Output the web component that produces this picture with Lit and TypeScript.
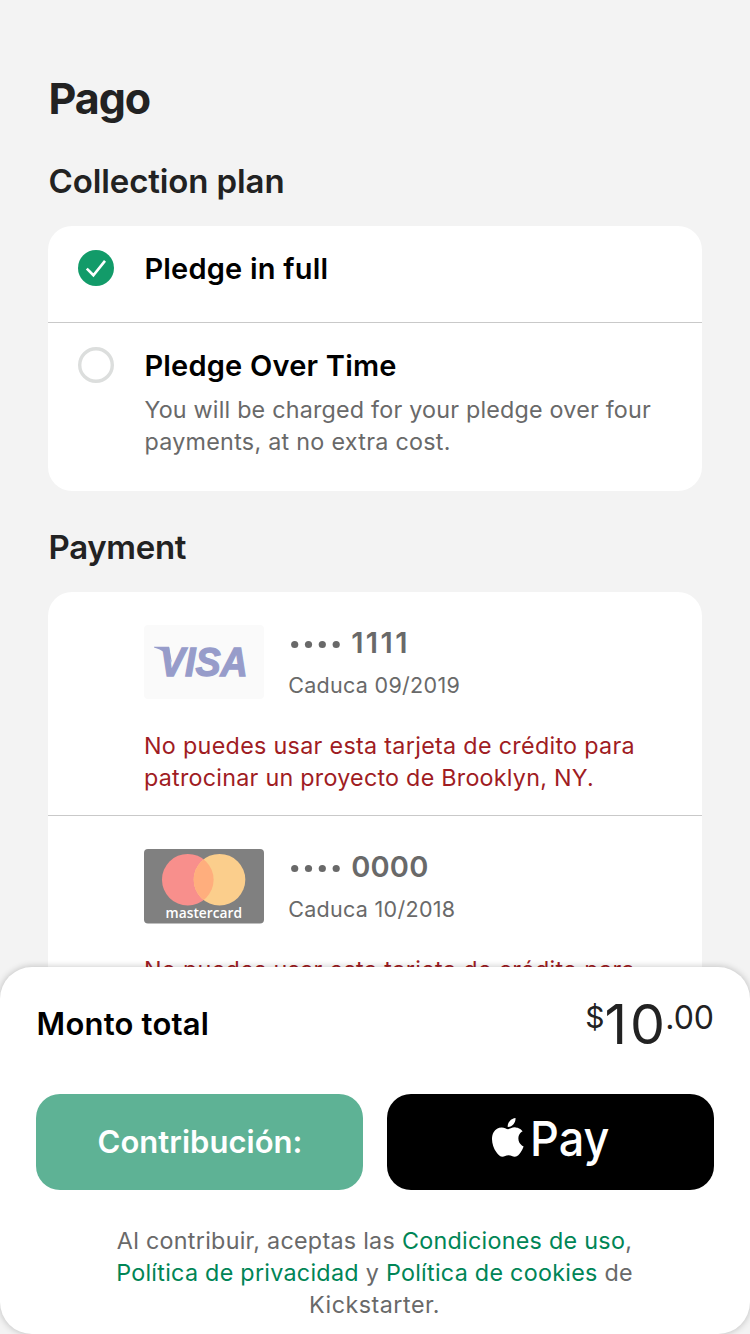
import { LitElement, html, svg, css, nothing } from "lit";
import { customElement, property } from "lit/decorators.js";

const base = css`
  :host { display: block; box-sizing: border-box; }
  svg { display: block; }
  h1, h2, p { margin: 0; }
`;

/** Round selector: filled with a tick when chosen, an empty ring otherwise. */
@customElement("plan-option")
class PlanOption extends LitElement {
  @property() label = "";
  @property({ type: Boolean }) selected = false;
  @property({ attribute: false }) lines: string[] = [];

  static styles = [base, css`
    .row { display: flex; gap: 30.4px; padding: 24px 30px 0; }
    .mark { flex: none; width: 36px; height: 36px; }
    .title { font-size: 29px; line-height: 37px; font-weight: 600; color: #000; letter-spacing: .21px; white-space: nowrap; }
    .note { margin-top: 10px; font-size: 23.3px; line-height: 32px; color: #696969; white-space: nowrap; }
    .note p:first-child { letter-spacing: .21px; }
    .note p:last-child { letter-spacing: .28px; }
  `];

  render() {
    return html`<div class="row">
      <svg class="mark" viewBox="0 0 36 36">
        ${this.selected
          ? svg`<circle cx="18" cy="18" r="18" fill="#129b69"/><path d="M8.8 18.6 L15.4 25.2 L27 10.9" fill="none" stroke="#fff" stroke-width="2.6"/>`
          : svg`<circle cx="18" cy="18" r="16.3" fill="#fff" stroke="#dcdedd" stroke-width="3.4"/>`}
      </svg>
      <div>
        <div class="title">${this.label}</div>
        ${this.lines.length ? html`<div class="note">${this.lines.map((l) => html`<p>${l}</p>`)}</div>` : nothing}
      </div>
    </div>`;
  }
}

const visa = svg`
  <rect width="120" height="74" rx="4" fill="#fafafa"/>
  <path d="M10 21.7 H25 L28 38 C24 28.5 18 24.9 10 22.6 Z" fill="#979cca"/>
  <text class="visa" x="15.8" y="51.2" textLength="88" lengthAdjust="spacingAndGlyphs">VISA</text>`;

const mastercard = svg`
  <defs><clipPath id="left"><circle cx="43.8" cy="30.7" r="25.8"/></clipPath></defs>
  <rect width="120" height="74.5" rx="4" fill="#808080"/>
  <circle cx="43.8" cy="30.7" r="25.8" fill="#f88f8c"/>
  <circle cx="75.5" cy="30.7" r="25.8" fill="#fbce8c"/>
  <circle cx="75.5" cy="30.7" r="25.8" fill="#ffae7d" clip-path="url(#left)"/>
  <text class="mc" x="21.6" y="69" textLength="76.4" lengthAdjust="spacingAndGlyphs">mastercard</text>`;

@customElement("saved-card")
class SavedCard extends LitElement {
  @property() brand = "visa";
  @property() digits = "";
  @property() expiry = "";
  @property({ attribute: false }) warning: string[] = [];

  static styles = [base, css`
    .card { box-sizing: border-box; padding: 33px 0 0 96px; height: 223px; }
    .top { display: flex; gap: 24.2px; height: 74px; }
    .logo { width: 120px; height: 75px; }
    .visa { font: italic 700 40px "Liberation Sans", sans-serif; fill: #979cca; stroke: #979cca; stroke-width: 1.3px; }
    .mc { font: 600 13.4px "Open Sans", sans-serif; fill: #fff; }
    .number { display: flex; height: 36px; font-size: 29px; line-height: 36px; font-weight: 600; color: #696969; }
    .dots { width: 63px; height: 36px; }
    .n1111 { letter-spacing: 2.4px; }
    .n0000 { letter-spacing: .2px; }
    .expiry { margin-top: 10px; font-size: 21.5px; line-height: 28px; color: #696969; letter-spacing: .3px; white-space: nowrap; }
    .warn { margin-top: 31px; font-size: 23.3px; line-height: 32px; color: #9f1c23; white-space: nowrap; }
    .warn p { letter-spacing: .31px; }
    .warn p + p { letter-spacing: .25px; }
  `];

  render() {
    return html`<div class="card">
      <div class="top">
        <svg class="logo" viewBox="0 0 120 75">${this.brand === "visa" ? visa : mastercard}</svg>
        <div>
          <div class="number">
            <svg class="dots" viewBox="0 0 63 36">
              ${[6.7, 20.5, 34.3, 48.2].map((x) => svg`<circle cx="${x}" cy="19.5" r="3.6" fill="#696969"/>`)}
            </svg>
            <span class="n${this.digits}">${this.digits}</span>
          </div>
          <div class="expiry">Caduca ${this.expiry}</div>
        </div>
      </div>
      <div class="warn">${this.warning.map((l) => html`<p>${l}</p>`)}</div>
    </div>`;
  }
}

@customElement("pledge-footer")
class PledgeFooter extends LitElement {
  static styles = [base, css`
    .sheet { box-sizing: border-box; height: 367px; padding: 0 36px; background: #fff; border-radius: 32px; box-shadow: 0 0 7px rgba(0, 0, 0, .24); }
    .total { display: flex; justify-content: space-between; height: 127px; }
    .label { padding: 37px 0 0 .6px; font-size: 31px; line-height: 40px; font-weight: 600; letter-spacing: .2px; color: #000; }
    .amount { display: flex; align-items: flex-start; color: #222; }
    .cur { padding-top: 32px; font-size: 30px; line-height: 36px; }
    .whole { padding-top: 27px; font-size: 55.5px; line-height: 60px; letter-spacing: 2.8px; margin-right: -2.5px; }
    .cents { padding-top: 33px; font-size: 32px; line-height: 36px; }
    .buttons { display: grid; grid-template-columns: 1fr 1fr; gap: 24px; }
    .btn { box-sizing: border-box; display: flex; align-items: center; justify-content: center; height: 96px; padding: 0 0 2px 1px; border: 0; border-radius: 24px; color: #fff; font: 600 31px Inter, sans-serif; }
    .green { background: #5eb295; letter-spacing: .03px; }
    .apple { background: #000; padding: 0; }
    .pay { width: 327px; height: 96px; }
    .paytext { font: 500 48.5px Inter, sans-serif; fill: #fff; }
    .legal { padding-top: 35px; margin-left: -1px; text-align: center; font-size: 23.3px; line-height: 32px; color: #696969; letter-spacing: .28px; white-space: nowrap; }
    .legal p:last-child { letter-spacing: .5px; }
    .link { color: #008556; }
  `];

  render() {
    return html`<div class="sheet">
      <div class="total">
        <div class="label">Monto total</div>
        <div class="amount"><span class="cur">$</span><span class="whole">10</span><span class="cents">.00</span></div>
      </div>
      <div class="buttons">
        <button class="btn green">Contribución:</button>
        <button class="btn apple" aria-label="Apple Pay">
          <svg class="pay" viewBox="0 0 327 96">
            <g transform="translate(101.4 24) scale(1.615)">
              <path fill="#fff" d="M12.152 6.896c-.948 0-2.415-1.078-3.96-1.04-2.04.027-3.91 1.183-4.961 3.014-2.117 3.675-.546 9.103 1.519 12.09 1.013 1.454 2.208 3.09 3.792 3.039 1.52-.065 2.09-.987 3.935-.987 1.831 0 2.35.987 3.96.948 1.637-.026 2.676-1.48 3.676-2.948 1.156-1.688 1.636-3.325 1.662-3.415-.039-.013-3.182-1.221-3.22-4.857-.026-3.04 2.48-4.494 2.597-4.559-1.429-2.09-3.623-2.324-4.39-2.376-2-.156-3.675 1.09-4.61 1.09zM15.53 3.83c.843-1.012 1.4-2.427 1.245-3.83-1.207.052-2.662.805-3.532 1.818-.78.896-1.454 2.338-1.273 3.714 1.338.104 2.715-.688 3.559-1.701"/>
            </g>
            <text class="paytext" x="143" y="62.2" textLength="79.4" lengthAdjust="spacingAndGlyphs">Pay</text>
          </svg>
        </button>
      </div>
      <div class="legal">
        <p>Al contribuir, aceptas las <span class="link">Condiciones de uso</span>,</p>
        <p><span class="link">Política de privacidad</span> y <span class="link">Política de cookies</span> de</p>
        <p>Kickstarter.</p>
      </div>
    </div>`;
  }
}

@customElement("app-root")
class AppRoot extends LitElement {
  static styles = [base, css`
    :host { position: relative; width: 750px; height: 1334px; overflow: hidden; background: #f3f3f3; font-family: Inter, sans-serif; color: #222; }
    .page { padding: 72px 48px 0; }
    h1 { padding-left: .6px; font-size: 43px; line-height: 52px; font-weight: 700; letter-spacing: -1.1px; }
    h2 { padding-left: .6px; font-size: 33px; line-height: 40px; font-weight: 600; }
    .plan { margin-top: 37px; letter-spacing: -.12px; }
    .payment { margin-top: 36px; letter-spacing: -.35px; }
    .panel { margin-top: 25px; background: #fff; border-radius: 24px; overflow: hidden; }
    .item + .item { border-top: 1px solid #c9c9c9; }
    .full { height: 96px; }
    .time { height: 169px; }
    .footer { position: absolute; left: 0; right: 0; bottom: 0; }
  `];

  render() {
    return html`
      <main class="page">
        <h1>Pago</h1>
        <h2 class="plan">Collection plan</h2>
        <section class="panel">
          <plan-option class="item full" label="Pledge in full" selected></plan-option>
          <plan-option class="item time" label="Pledge Over Time"
            .lines=${["You will be charged for your pledge over four", "payments, at no extra cost."]}></plan-option>
        </section>
        <h2 class="payment">Payment</h2>
        <section class="panel">
          <saved-card class="item" brand="visa" digits="1111" expiry="09/2019"
            .warning=${["No puedes usar esta tarjeta de crédito para", "patrocinar un proyecto de Brooklyn, NY."]}></saved-card>
          <saved-card class="item" brand="mastercard" digits="0000" expiry="10/2018"
            .warning=${["No puedes usar esta tarjeta de crédito para"]}></saved-card>
        </section>
      </main>
      <pledge-footer class="footer"></pledge-footer>`;
  }
}
